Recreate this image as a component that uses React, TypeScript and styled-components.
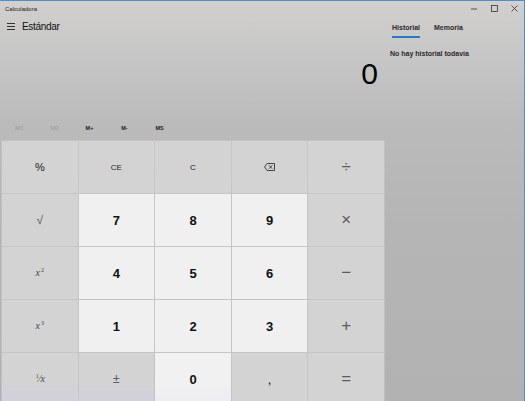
import React from "react";
import styled, { createGlobalStyle } from "styled-components";

const Global = createGlobalStyle`
  html, body {
    margin: 0;
    padding: 0;
    background: #b4b4b4;
  }
  * {
    box-sizing: border-box;
  }
`;

const Window = styled.div`
  width: 525px;
  height: 401px;
  overflow: hidden;
  display: flex;
  flex-direction: column;
  font-family: "Liberation Sans", Arial, sans-serif;
  color: #111;
  background: linear-gradient(180deg, #d1d0ce 0%, #c6c6c6 14%, #bbbbbb 30%, #b5b5b5 55%, #b2b2b2 100%);
  border-top: 1px solid #4f8fc8;
  border-right: 1px solid #4f8fc8;
`;

const TitleBar = styled.div`
  height: 15px;
  flex-shrink: 0;
  display: flex;
  align-items: center;
  padding-left: 5px;
`;

const Title = styled.span`
  font-size: 6px;
  color: #222;
`;

const Controls = styled.div`
  margin-left: auto;
  display: flex;
  align-items: center;
`;

const Control = styled.div`
  width: 20px;
  height: 14px;
  display: flex;
  align-items: center;
  justify-content: center;
  color: #333;
`;

const Body = styled.div`
  flex: 1;
  display: flex;
  min-height: 0;
`;

const Main = styled.div`
  width: 384px;
  flex-shrink: 0;
  display: flex;
  flex-direction: column;
`;

const Header = styled.div`
  height: 20px;
  flex-shrink: 0;
  display: flex;
  align-items: center;
  gap: 7px;
  padding-left: 7px;
`;

const Mode = styled.span`
  font-size: 10px;
  letter-spacing: -0.3px;
  color: #111;
`;

const Display = styled.div`
  height: 73px;
  flex-shrink: 0;
  display: flex;
  justify-content: flex-end;
  padding: 23px 6px 0 0;
  font-size: 30px;
  font-weight: 300;
  line-height: 1;
  color: #000;
`;

const MemoryRow = styled.div`
  height: 32px;
  flex-shrink: 0;
  display: flex;
  align-items: center;
  padding: 6px 0 0 2px;
`;

const MemButton = styled.span<{ $off?: boolean }>`
  width: 35px;
  text-align: center;
  font-size: 5.5px;
  font-weight: 700;
  color: ${(p) => (p.$off ? "#a4a4a4" : "#1c1c1c")};
`;

const Keypad = styled.div`
  flex-shrink: 0;
  display: grid;
  grid-template-columns: repeat(5, 1fr);
  grid-auto-rows: 52px;
  gap: 1px;
  padding-left: 2px;
`;

const Key = styled.div<{ $digit?: boolean; $tint?: boolean }>`
  display: flex;
  align-items: center;
  justify-content: center;
  background: ${(p) =>
    p.$digit
      ? p.$tint
        ? "linear-gradient(180deg, #f1f1f1 60%, #ecebf2 100%)"
        : "#f0f0f0"
      : p.$tint
      ? "linear-gradient(180deg, #d3d3d3 55%, #d0cfe0 100%)"
      : "#d3d3d3"};
  outline: 1px solid rgba(200, 200, 200, 0.6);
  color: #111;
  font-size: 13px;
  font-weight: ${(p) => (p.$digit ? 700 : 400)};
`;

const Small = styled.span`
  font-size: 8px;
  color: #222;
`;

const Pct = styled.span`
  font-size: 11px;
  color: #222;
`;

const Op = styled.span<{ $size?: number }>`
  font-size: ${(p) => p.$size ?? 17}px;
  font-weight: 400;
  color: #5a5a5a;
  font-family: "Liberation Sans", Arial, sans-serif;
`;

const Fn = styled.span`
  font-family: "Liberation Serif", serif;
  font-style: italic;
  font-size: 10px;
  color: #444;
  sup {
    font-style: normal;
    font-size: 6px;
    margin-left: 1px;
  }
`;

const Side = styled.div`
  flex: 1;
  display: flex;
  flex-direction: column;
  padding-left: 8px;
`;

const Tabs = styled.div`
  display: flex;
  gap: 14px;
  margin-top: 8px;
  height: 14px;
`;

const Tab = styled.span<{ $active?: boolean }>`
  font-size: 7px;
  font-weight: 700;
  color: #2a2a2a;
  padding-bottom: 3px;
  border-bottom: 2px solid ${(p) => (p.$active ? "#2a78c8" : "transparent")};
  height: 14px;
`;

const Empty = styled.span`
  margin-top: 12px;
  margin-left: -2px;
  font-size: 7px;
  font-weight: 700;
  color: #2a2a2a;
`;

const Menu = () => (
  <svg width="8" height="7" viewBox="0 0 8 7">
    <path d="M0 0.5H8M0 3.5H8M0 6.5H8" stroke="#333" strokeWidth="1" />
  </svg>
);

const Backspace = () => (
  <svg width="11" height="8" viewBox="0 0 11 8" fill="none" stroke="#333" strokeWidth="0.9">
    <path d="M3 0.5H10.5V7.5H3L0.6 4Z" />
    <path d="M5 2.3L8.2 5.7M8.2 2.3L5 5.7" />
  </svg>
);

type KeyDef = { label: React.ReactNode; digit?: boolean; tint?: boolean };

const keys: KeyDef[] = [
  { label: <Pct>%</Pct> },
  { label: <Small>CE</Small> },
  { label: <Small>C</Small> },
  { label: <Backspace /> },
  { label: <Op>÷</Op> },
  { label: <Op $size={12}>√</Op> },
  { label: "7", digit: true },
  { label: "8", digit: true },
  { label: "9", digit: true },
  { label: <Op>×</Op> },
  { label: <Fn>x<sup>2</sup></Fn> },
  { label: "4", digit: true },
  { label: "5", digit: true },
  { label: "6", digit: true },
  { label: <Op>−</Op> },
  { label: <Fn>x<sup>3</sup></Fn> },
  { label: "1", digit: true },
  { label: "2", digit: true },
  { label: "3", digit: true },
  { label: <Op>+</Op> },
  { label: <Fn><sup>1</sup>⁄x</Fn>, tint: true },
  { label: <Op $size={12}>±</Op>, tint: true },
  { label: "0", digit: true, tint: true },
  { label: "," },
  { label: <Op>=</Op> },
];

const App = () => {
  return (
    <Window>
      <Global />
      <TitleBar>
        <Title>Calculadora</Title>
        <Controls>
          <Control>
            <svg width="6" height="2" viewBox="0 0 6 2">
              <path d="M0 1H6" stroke="#333" strokeWidth="0.8" />
            </svg>
          </Control>
          <Control>
            <svg width="7" height="7" viewBox="0 0 7 7">
              <rect x="0.5" y="0.5" width="6" height="6" fill="none" stroke="#333" strokeWidth="0.8" />
            </svg>
          </Control>
          <Control>
            <svg width="7" height="7" viewBox="0 0 7 7">
              <path d="M0.5 0.5L6.5 6.5M6.5 0.5L0.5 6.5" stroke="#333" strokeWidth="0.8" />
            </svg>
          </Control>
        </Controls>
      </TitleBar>
      <Body>
        <Main>
          <Header>
            <Menu />
            <Mode>Estándar</Mode>
          </Header>
          <Display>0</Display>
          <MemoryRow>
            <MemButton $off>MC</MemButton>
            <MemButton $off>MR</MemButton>
            <MemButton>M+</MemButton>
            <MemButton>M-</MemButton>
            <MemButton>MS</MemButton>
          </MemoryRow>
          <Keypad>
            {keys.map((k, i) => (
              <Key key={i} $digit={k.digit} $tint={k.tint}>
                {k.label}
              </Key>
            ))}
          </Keypad>
        </Main>
        <Side>
          <Tabs>
            <Tab $active>Historial</Tab>
            <Tab>Memoria</Tab>
          </Tabs>
          <Empty>No hay historial todavía</Empty>
        </Side>
      </Body>
    </Window>
  );
};

export default App;
